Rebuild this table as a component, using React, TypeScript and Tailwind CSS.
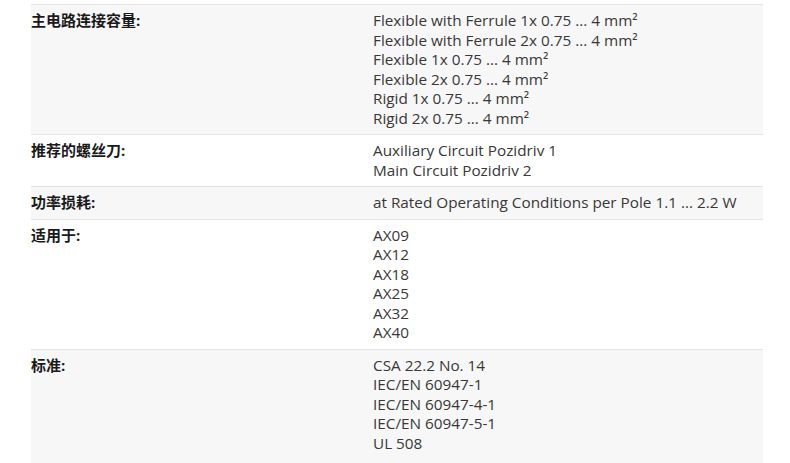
const rows: Array<{ label: string; values: string[] }> = [
  {
    label: '主电路连接容量:',
    values: [
      'Flexible with Ferrule 1x 0.75 ... 4 mm²',
      'Flexible with Ferrule 2x 0.75 ... 4 mm²',
      'Flexible 1x 0.75 ... 4 mm²',
      'Flexible 2x 0.75 ... 4 mm²',
      'Rigid 1x 0.75 ... 4 mm²',
      'Rigid 2x 0.75 ... 4 mm²',
    ],
  },
  {
    label: '推荐的螺丝刀:',
    values: ['Auxiliary Circuit Pozidriv 1', 'Main Circuit Pozidriv 2'],
  },
  {
    label: '功率损耗:',
    values: ['at Rated Operating Conditions per Pole 1.1 ... 2.2 W'],
  },
  {
    label: '适用于:',
    values: ['AX09', 'AX12', 'AX18', 'AX25', 'AX32', 'AX40'],
  },
  {
    label: '标准:',
    values: ['CSA 22.2 No. 14', 'IEC/EN 60947-1', 'IEC/EN 60947-4-1', 'IEC/EN 60947-5-1', 'UL 508'],
  },
];

export default function App() {
  return (
    <div className="w-[790px] h-[463px] overflow-hidden bg-white pt-[4px]">
      <div className="ml-[31px] w-[732px] border-t border-[#e4e4e4]">
        {rows.map((row, i) => (
          <div
            key={row.label}
            className={`grid grid-cols-[342px_1fr] pt-[6px] ${
              i === rows.length - 1 ? 'pb-[20px]' : 'pb-[6px] border-b border-[#e4e4e4]'
            } ${i % 2 === 0 ? 'bg-[#f7f7f7]' : 'bg-white'}`}
          >
            <div className="text-[15px] leading-[19.5px] font-bold text-[#1a1a1a] [font-family:'Open_Sans','Noto_Sans_CJK_SC',sans-serif]">
              {row.label}
            </div>
            <div className="text-[15.3px] leading-[19.5px] text-[#383838] [font-family:'Open_Sans','Noto_Sans_CJK_SC',sans-serif]">
              {row.values.map((v) => (
                <div key={v}>{v}</div>
              ))}
            </div>
          </div>
        ))}
      </div>
    </div>
  );
}
